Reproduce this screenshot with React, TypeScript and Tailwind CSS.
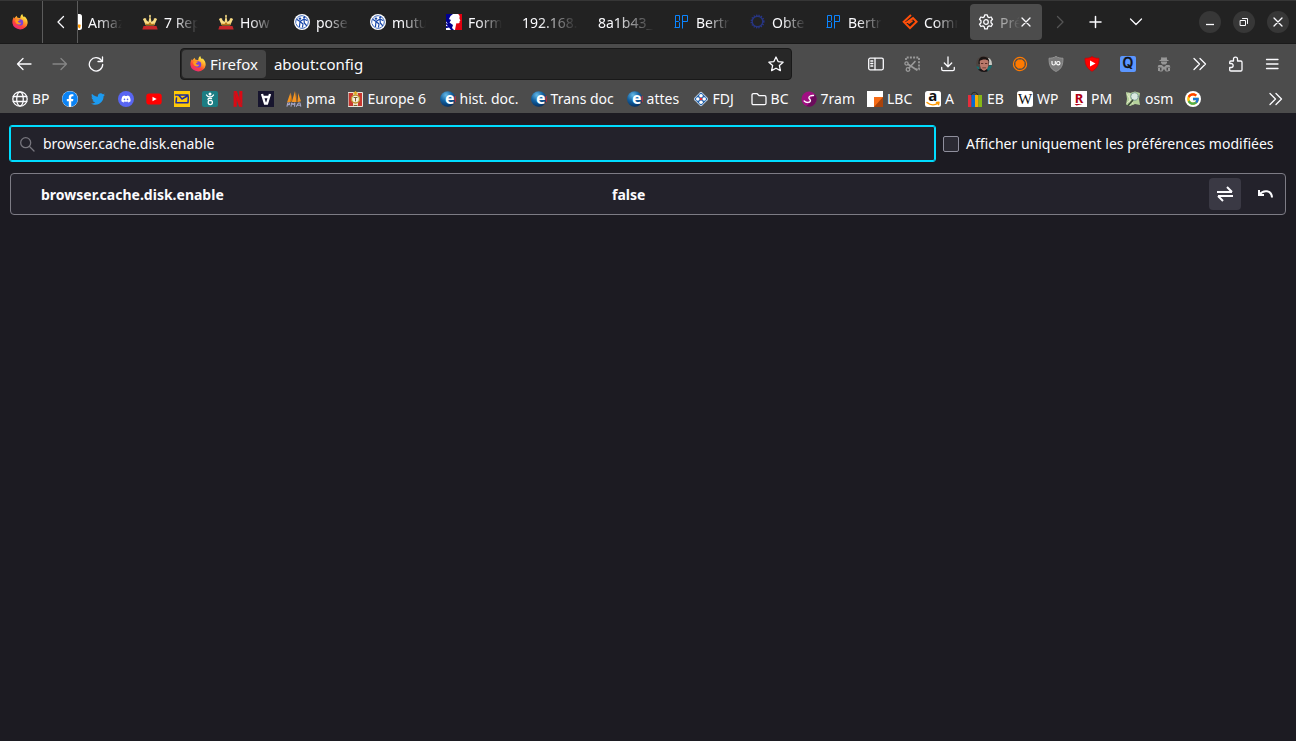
import type { ReactNode } from "react";
import { FaDiscord, FaFacebook, FaTwitter } from "react-icons/fa";
import { FcGoogle } from "react-icons/fc";
import { SiNetflix } from "react-icons/si";

type IconProps = { children: ReactNode; className?: string; box?: string };

function Svg({ children, className = "size-4", box = "0 0 16 16" }: IconProps) {
  return (
    <svg
      viewBox={box}
      className={`shrink-0 ${className}`}
      fill="none"
      stroke="currentColor"
      strokeWidth="1.3"
      strokeLinecap="round"
      strokeLinejoin="round"
      aria-hidden="true"
    >
      {children}
    </svg>
  );
}

function FirefoxLogo({ id }: { id: string }) {
  return (
    <Svg>
      <defs>
        <linearGradient id={id} x1="0.8" y1="0" x2="0.2" y2="1">
          <stop offset="0.1" stopColor="#fff04a" />
          <stop offset="0.42" stopColor="#ff9a26" />
          <stop offset="0.68" stopColor="#ff4338" />
          <stop offset="1" stopColor="#e5218b" />
        </linearGradient>
      </defs>
      <g stroke="none">
        <path
          fill={`url(#${id})`}
          d="M10.3 0c.2 1.6 1 2.5 2 3.3 0-.5.1-.8.2-1.1 2 1.700 3.300 4.200 3.200 6.700A7.700 7.300 0 0 1 .4 9C.2 6.500.8 4.600 2 3l.3 1.400C2.900 3.300 3.700 2.300 4.800 1.700c0 .8.200 1.500.800 2 1-.1 1.900.1 2.600.5C8.300 2.500 9 1 10.300 0z"
        />
        <circle cx="8" cy="8.400" r="3.200" fill="#7a41d8" />
        <path fill="#ff9a20" d="M3.300 6c1.500-1 3.300-1 4.600-.2-.2.8-1.100 1.100-2 1.500.3 1.300 1.700 2 3.300 1.200-.5 2.200-3 2.700-4.600 1.300C3.500 8.900 3 7.400 3.300 6z" />
      </g>
    </Svg>
  );
}

const CrownIcon = () => (
  <Svg>
    <g stroke="none">
      <path fill="#f9dd85" d="M8 .5l1.100 1.600-.6.900 1 5 2.300-2-.1-1.300 1.400-.7 2 .9-1.200 2.600-1.600 3.800H3.700L2.100 7.500.9 4.900l2-.9 1.400.7-.1 1.300 2.300 2 1-5-.6-.9z" />
      <path fill="#b7791b" d="M3.300 9.500l3 .6L8 8l1.700 2.100 3-.6-.6 1.800H3.900z" />
      <path fill="#c9262b" d="M1.500 12h13l1.200 3.500H.3z" />
    </g>
  </Svg>
);

const PeopleIcon = () => (
  <Svg>
    <circle cx="8" cy="8" r="8" fill="#fff" stroke="none" />
    <circle cx="8" cy="8" r="6.300" stroke="#2454b0" strokeWidth=".9" strokeDasharray="5 1.200" />
    <g stroke="#1746a8" strokeWidth="1.200">
      <path d="M3 5.500l3 2 4-2.500 3 1.500M6 7.500l-.5 5M6 7.500l3 2.500-.5 3M10 5l.3 4 2.200 2.500" />
    </g>
    <g fill="#1746a8" stroke="none">
      <circle cx="6" cy="4.600" r="1.200" />
      <circle cx="10.200" cy="3.400" r="1.100" />
    </g>
  </Svg>
);

const MarianneIcon = () => (
  <Svg>
    <g stroke="none">
      <path fill="#fff" d="M0 0h16v16H0z" />
      <path fill="#000091" d="M0 0h7L4.500 2 3 5l2 1-1.500 2.500L7 11l-1 3 2 2H5l-2-2.500L1 14H0v-2l2 .2-2-2V9l2 1-2-2.500z" />
      <path fill="#e1000f" d="M16 0h-3.800l1.500 2-.3 2.500 1 2-.9.800.2 1-.8 1-2.900.2.300 2L16 13.500z" />
      <path fill="#e1000f" d="M10 10.500L16 13v3H9z" />
    </g>
  </Svg>
);

const BpIcon = () => (
  <Svg>
    <path
      stroke="#0a84ff"
      strokeWidth="1"
      strokeLinecap="butt"
      strokeLinejoin="miter"
      d="M1.500 14V1.500h4v5l-1 1 1 1v5h-5M1.500 7.500h3M8.500 14.500v-13h5v6h-5"
    />
  </Svg>
);

const RingIcon = () => (
  <Svg>
    <circle cx="7.500" cy="7.500" r="5.300" stroke="#27357f" strokeWidth="1.400" />
    <circle cx="7.500" cy="7.500" r="6.300" stroke="#28368a" strokeWidth="1.400" strokeDasharray="1.200 1.300" strokeLinecap="butt" />
  </Svg>
);

const DiamondIcon = () => (
  <Svg>
    <path stroke="#ff4f0a" strokeWidth="2" strokeLinecap="butt" strokeLinejoin="miter" d="M9 1L1.700 7.700l6.300 6.500 6.600-6.500-3.600-3.600-5.500 3.800 3 .2" />
    <path stroke="#ff4f0a" strokeWidth="1.600" strokeLinecap="butt" d="M6.500 9.700l4-3" />
  </Svg>
);

const GearIcon = () => (
  <Svg>
    <circle cx="8" cy="8" r="2.300" />
    <path d="M6.700.9h2.600l.5 2 1.300.7 2-.6 1.400 2.300-1.500 1.500v1.900l1.500 1.500-1.400 2.300-2-.6-1.300.8-.5 2.200H6.700l-.5-2.200-1.300-.8-2 .6-1.400-2.300L3 8.700V6.800L1.500 5.300 2.900 3l2 .6 1.300-.7z" />
  </Svg>
);

const CloseIcon = () => (
  <Svg className="size-3" box="0 0 12 12">
    <path d="M2 2l8 8M10 2l-8 8" />
  </Svg>
);

const GlobeIcon = () => (
  <Svg>
    <circle cx="8" cy="8" r="7.200" />
    <ellipse cx="8" cy="8" rx="3.300" ry="7.200" />
    <path d="M1.300 5.500h13.400M1.300 10.500h13.400" />
  </Svg>
);

const FacebookIcon = () => (
  <span className="flex size-4 shrink-0 rounded-full bg-white text-[#0a83f5]">
    <FaFacebook className="size-4" />
  </span>
);

const DiscordIcon = () => (
  <span className="flex size-4 shrink-0 items-center justify-center rounded-full bg-[#5865f2] text-white">
    <FaDiscord className="size-2.5" />
  </span>
);

const YoutubeIcon = () => (
  <Svg>
    <rect x=".3" y="2.500" width="15.400" height="11" rx="2.800" fill="#f00" stroke="none" />
    <path fill="#fff" stroke="none" d="M6.500 5.700l4.200 2.300-4.200 2.300z" />
  </Svg>
);

const PostIcon = () => (
  <Svg>
    <path fill="#ffc907" stroke="none" d="M0 0h16v16H0z" />
    <path stroke="#1f2b9c" strokeWidth="1.500" d="M1.500 4h3l3.500 4 6-3.500M5.500 4h8.500M2.500 7L2 11.800h12l.3-6" />
  </Svg>
);

const TealIcon = () => (
  <Svg>
    <rect width="16" height="16" rx="2" fill="#1c7d83" stroke="none" />
    <circle cx="8" cy="3" r="1.500" fill="#fff" stroke="none" />
    <path stroke="#fff" strokeWidth="1.300" d="M4.500 4c.8 1.500 2 2 3.500 2s2.800-.5 3.500-2" />
    <path stroke="#fff" strokeWidth="1.300" d="M9.500 7.500c-2-.5-3.700 0-3.500 1.200.2.900 1.300 1 2.700.9" />
    <circle cx="8.300" cy="11.500" r="2.100" stroke="#fff" strokeWidth="1.300" />
  </Svg>
);

const InvertedAIcon = () => (
  <Svg>
    <path fill="#17152e" stroke="none" d="M0 0h16v16H0z" />
    <path stroke="#fff" strokeWidth="2.300" strokeLinecap="butt" strokeLinejoin="miter" d="M4 3l3 9.500h2L12 3M5 6h6" />
  </Svg>
);

const SailsIcon = () => (
  <Svg>
    <g stroke="none">
      <path fill="#f39422" d="M4.500 1.500L1 11.500l4.500-1zM9 0L5.800 11h4.700zM12 2v9l3-.7z" />
      <path fill="#c8700c" d="M5.500 3L4 10.500l2-.5zM10 1l.8 10H12z" />
    </g>
    <path stroke="#a5a6c8" strokeWidth="1.100" d="M1 15.300l.7-3.300h2l-.3 1.600H1.500M5 15.300l.6-3.300 1.500 1.500L8.900 12l-.3 3.300M10.500 15.300l2-3.300h1.500l.8 3.300M11.300 14.200h3" />
  </Svg>
);

const EuropeIcon = () => (
  <Svg>
    <path fill="#c8372f" stroke="#e9e4dc" strokeWidth="1" strokeLinejoin="miter" d="M.5 1.500h14v14H.5z" />
    <path fill="#eee3cf" stroke="none" d="M5 2h5v13H5z" />
    <circle cx="7.500" cy="8" r="4" fill="#f7f1df" stroke="#bd942e" strokeWidth="1.400" />
    <path stroke="#77612f" strokeWidth="1" d="M6 6.500h3M7.500 6.500v3.500M6 14.500h3" />
    <path stroke="#e0a91c" strokeWidth="1.500" d="M6 2h3M7.500.8V3" />
  </Svg>
);

const EBadgeIcon = () => (
  <Svg>
    <defs>
      <radialGradient id="e-badge" cx=".38" cy=".25" r=".8">
        <stop offset="0" stopColor="#66b9e6" />
        <stop offset=".5" stopColor="#12609f" />
        <stop offset="1" stopColor="#052b5b" />
      </radialGradient>
    </defs>
    <circle cx="7.800" cy="8" r="7.800" fill="url(#e-badge)" stroke="none" />
    <path stroke="#e02b36" strokeWidth="1" d="M15.200 5.500v5" />
    <text x="5" y="12.500" fontSize="16" fontWeight="700" fontFamily="Noto Sans" fill="#fff" stroke="none">e</text>
  </Svg>
);

const CloverIcon = () => (
  <Svg>
    <g stroke="none">
      <rect x="2.500" y="2.500" width="11" height="11" rx="1.800" transform="rotate(45 8 8)" fill="#d5e2f0" />
      <rect x="3.200" y="3.200" width="9.600" height="9.600" rx="1.200" transform="rotate(45 8 8)" fill="#2363ac" />
      <g fill="#fff">
        <circle cx="8" cy="4.800" r="1.800" />
        <circle cx="8" cy="11.200" r="1.800" />
        <circle cx="4.800" cy="8" r="1.800" />
        <circle cx="11.200" cy="8" r="1.800" />
      </g>
      <circle cx="8" cy="8" r="1.300" fill="#df2632" />
    </g>
  </Svg>
);

const FolderIcon = () => (
  <Svg>
    <path d="M2.500 2.700h3.700l2 2h5.300c1 0 1.500.6 1.500 1.500v6c0 1-.5 1.500-1.500 1.500h-11C1.500 13.700 1 13.200 1 12.200v-8c0-1 .5-1.500 1.500-1.500z" />
  </Svg>
);

const SwirlIcon = () => (
  <Svg>
    <circle cx="8" cy="8" r="7.500" fill="#a00f82" stroke="none" />
    <path fill="#6a0c5b" stroke="none" d="M14 3.500A7.500 7.500 0 0 1 5 14.900C11 13 8 6 14 3.500z" />
    <path stroke="#fff" strokeWidth="1.400" d="M12.500 4.500C10 4.200 7.600 5.300 7.900 7c.2 1.300 2 1.500 1.500 3-.6 1.800-4.200 2-6.200 0" />
  </Svg>
);

const LbcIcon = () => (
  <Svg>
    <path fill="#fff" stroke="none" d="M0 0h16v16H0z" />
    <path fill="#f56b16" stroke="none" d="M7 6h9v10H7z" />
    <path fill="#a9430b" stroke="none" d="M16 6v10H7z" />
  </Svg>
);

const AmazonIcon = () => (
  <Svg>
    <rect width="16" height="16" rx="2.500" fill="#fff" stroke="none" />
    <text x="3.200" y="10.300" fontSize="15" fontWeight="700" fontFamily="Noto Sans" fill="#111" stroke="none">a</text>
    <path stroke="#f90" strokeWidth="1.500" d="M2 11.500c3.500 3 8 3 11 .7M11.500 11.400l2.500-.2-.5 2.400" />
  </Svg>
);

const BagIcon = () => (
  <Svg>
    <path stroke="#202020" strokeWidth="1" strokeDasharray="1.500 1" d="M4 5.500C4 0 11 0 11 5.500" />
    <g stroke="none">
      <path fill="#e52d3b" d="M1 4h3.500v12H1z" />
      <path fill="#0868d2" d="M4.500 4H8v12H4.500z" />
      <path fill="#f5ae05" d="M8 4h3.500v12H8z" />
      <path fill="#86b817" d="M11.500 4H15v12h-3.500z" />
    </g>
  </Svg>
);

const WikiIcon = () => (
  <Svg>
    <rect width="16" height="16" rx="2.500" fill="#fff" stroke="none" />
    <text x="8" y="13" textAnchor="middle" fontSize="15" fontFamily="Liberation Serif" fill="#111" stroke="none">W</text>
  </Svg>
);

const RakutenIcon = () => (
  <Svg>
    <path fill="#fff" stroke="none" d="M0 0h16v16H0z" />
    <text x="8" y="12" textAnchor="middle" fontSize="13" fontWeight="700" fontFamily="Noto Sans" fill="#b00012" stroke="none">R</text>
    <path fill="#b00012" stroke="none" d="M3.500 13h8l-6 1.500z" />
  </Svg>
);

const MapIcon = () => (
  <Svg>
    <path fill="#b5d29b" stroke="none" d="M1 1l4 1 5-1.500L15 2l-1 6 1 6-5-1-5 2-4-1.500L2 8z" />
    <path stroke="#dfe8c4" strokeWidth="1" d="M2 3l6 10M2 12l6-6M4 2l1 12" />
    <circle cx="9.500" cy="5.500" r="3.800" fill="#d9e9e2" stroke="#7b9b95" strokeWidth="1" />
    <path stroke="#3d4e38" strokeWidth="1.800" d="M7.500 9.500l-4 4.500" />
  </Svg>
);

const GoogleIcon = () => (
  <span className="flex size-4 shrink-0 items-center justify-center rounded-full bg-white">
    <FcGoogle className="size-3.5" />
  </span>
);

const AvatarIcon = () => (
  <Svg>
    <defs>
      <clipPath id="avatar">
        <circle cx="8" cy="8" r="8" />
      </clipPath>
    </defs>
    <g clipPath="url(#avatar)" stroke="none">
      <path fill="#4c4440" d="M0 0h16v16H0z" />
      <path fill="#c9cac4" d="M12 2l4 1v6h-3z" />
      <path fill="#156e70" d="M11 11l5-2v7h-5zM0 10l3 1v5H0z" />
      <path fill="#1b1514" d="M2.500 8C2 2 5 .5 8 .7s6 2 5 7z" />
      <path fill="#b9786a" d="M3.800 5C6 3 11 3 12.500 5c.3 5.500-1.300 9.800-4.300 9.800S3.500 10 3.800 5z" />
      <path fill="#5c3029" d="M5 7h2.300v1H5zM9 7h2.300v1H9zM6.300 11.500h3.800v.7H6.300z" />
      <path fill="#171315" d="M2 13.500l3-.5 3 2 3-2 1 3H2z" />
    </g>
  </Svg>
);

type Tab = { label: string; icon?: ReactNode };

const tabs: Tab[] = [
  { label: "Amaz", icon: <AmazonIcon /> },
  { label: "7 Rep", icon: <CrownIcon /> },
  { label: "How", icon: <CrownIcon /> },
  { label: "pose", icon: <PeopleIcon /> },
  { label: "mutu", icon: <PeopleIcon /> },
  { label: "Form", icon: <MarianneIcon /> },
  { label: "192.168." },
  { label: "8a1b43_" },
  { label: "Bertr", icon: <BpIcon /> },
  { label: "Obte", icon: <RingIcon /> },
  { label: "Bertr", icon: <BpIcon /> },
  { label: "Comm", icon: <DiamondIcon /> },
];

type Bookmark = { name: string; label?: string; width?: string; icon: ReactNode };

const bookmarks: Bookmark[] = [
  { name: "BP", label: "BP", width: "min-w-[38px]", icon: <GlobeIcon /> },
  { name: "Facebook", icon: <FacebookIcon /> },
  { name: "Twitter", icon: <FaTwitter className="size-4 p-px text-[#1d9bf0]" /> },
  { name: "Discord", icon: <DiscordIcon /> },
  { name: "YouTube", icon: <YoutubeIcon /> },
  { name: "Mail", icon: <PostIcon /> },
  { name: "Santé", icon: <TealIcon /> },
  { name: "Netflix", icon: <SiNetflix className="size-4 text-[#d90a15]" /> },
  { name: "Vidéo", icon: <InvertedAIcon /> },
  { name: "pma", label: "pma", width: "min-w-[49px]", icon: <SailsIcon /> },
  { name: "Europe 6", label: "Europe 6", width: "min-w-[80px]", icon: <EuropeIcon /> },
  { name: "hist. doc.", label: "hist. doc.", width: "min-w-[79px]", icon: <EBadgeIcon /> },
  { name: "Trans doc", label: "Trans doc", width: "min-w-[84px]", icon: <EBadgeIcon /> },
  { name: "attes", label: "attes", width: "min-w-[54px]", icon: <EBadgeIcon /> },
  { name: "FDJ", label: "FDJ", width: "min-w-[46px]", icon: <CloverIcon /> },
  { name: "BC", label: "BC", width: "min-w-[38px]", icon: <FolderIcon /> },
  { name: "7ram", label: "7ram", width: "min-w-[54px]", icon: <SwirlIcon /> },
  { name: "LBC", label: "LBC", width: "min-w-[46px]", icon: <LbcIcon /> },
  { name: "A", label: "A", width: "min-w-[30px]", icon: <AmazonIcon /> },
  { name: "EB", label: "EB", width: "min-w-[38px]", icon: <BagIcon /> },
  { name: "WP", label: "WP", width: "min-w-[42px]", icon: <WikiIcon /> },
  { name: "PM", label: "PM", width: "min-w-[42px]", icon: <RakutenIcon /> },
  { name: "osm", label: "osm", width: "min-w-[48px]", icon: <MapIcon /> },
  { name: "Google", icon: <GoogleIcon /> },
];

type Action = { name: string; icon: ReactNode };

const actions: Action[] = [
  {
    name: "Panneau latéral",
    icon: (
      <Svg>
        <rect x=".7" y="2.200" width="14.600" height="11.600" rx="1.500" />
        <path d="M7 2.500v11M2.800 5h2M2.800 7.500h2M2.800 10h2" />
      </Svg>
    ),
  },
  {
    name: "Capture d’écran",
    icon: (
      <Svg className="size-4 text-[#9a9a9a]">
        <path strokeWidth="1.800" strokeDasharray="2 1.200" strokeLinecap="butt" d="M2 4V1.500h13v12h-3" />
        <circle cx="2.500" cy="7.500" r="1.600" />
        <circle cx="4" cy="13.500" r="1.800" />
        <path d="M4 8.300l8.500 5.500M5 12l6-6.500" strokeWidth="1.700" />
      </Svg>
    ),
  },
  {
    name: "Téléchargements",
    icon: (
      <Svg>
        <path d="M8 1v9.500M4.300 7L8 10.700 11.700 7M1.700 11.500v1.800c0 .9.500 1.400 1.400 1.400h9.800c.9 0 1.400-.5 1.400-1.400v-1.800" />
      </Svg>
    ),
  },
  { name: "Compte", icon: <AvatarIcon /> },
  {
    name: "Conteneurs",
    icon: (
      <Svg>
        <circle cx="8" cy="8" r="6.600" stroke="#ff7a00" strokeWidth="1.200" />
        <path fill="#ff7a00" stroke="none" d="M6 3.500h4L12.500 6v4L10 12.500H6L3.500 10V6z" />
      </Svg>
    ),
  },
  {
    name: "Bloqueur",
    icon: (
      <Svg>
        <path fill="#7c7c7c" stroke="#9a9a9a" strokeWidth=".8" d="M8 .5c2 1.300 4.500 1.700 7 1.700 0 7-1.500 10.800-7 13.300C2.500 13 1 9.200 1 2.200 3.500 2.200 6 1.800 8 .5z" />
        <path stroke="#fff" strokeWidth="1.100" strokeLinecap="butt" d="M4 5v2.700c0 1.700 3.300 1.700 3.300 0V5" />
        <circle cx="10.300" cy="7.200" r="1.700" stroke="#fff" strokeWidth="1.100" />
      </Svg>
    ),
  },
  {
    name: "Vidéo",
    icon: (
      <Svg>
        <path fill="#f00" stroke="#c00" strokeWidth=".7" d="M8 .8c2 1 4.500 1.500 7 1.500 0 5.500-1.500 10-7 13-5.500-3-7-7.500-7-13 2.500 0 5-.5 7-1.500z" />
        <path fill="#fff" stroke="none" d="M6 4.500L11.500 7.500 6 10.500z" />
      </Svg>
    ),
  },
  {
    name: "Recherche",
    icon: (
      <Svg>
        <rect width="16" height="16" rx="2" fill="#5b96ff" stroke="none" />
        <text x="8" y="12.300" textAnchor="middle" fontSize="14" fontWeight="500" fontFamily="Inter" fill="#111" stroke="#111" strokeWidth=".4">Q</text>
      </Svg>
    ),
  },
  {
    name: "Confidentialité",
    icon: (
      <Svg className="size-4 text-[#979797]">
        <g fill="currentColor" stroke="none">
          <path d="M5.500 1l1 .5h3l1-.5.8 3h1.200v1H3.500V4h1.200zM5 5.500h6v1.500L9.500 8.500h-3L5 7z" />
          <path d="M2.500 9h3.300L8 11l2.200-2h3.300l1 2.500h-4v3h2v1H9.800L8 13l-1.800 2.500H3.500v-1h2v-3h-4z" />
          <path d="M2 12h2v3H2zM12 12h2v3h-2z" />
        </g>
      </Svg>
    ),
  },
  {
    name: "Plus d’outils",
    icon: (
      <Svg>
        <path d="M2 2.500L7.500 8 2 13.500M8 2.500L13.500 8 8 13.500" />
      </Svg>
    ),
  },
  {
    name: "Extensions",
    icon: (
      <Svg>
        <path d="M1.700 7.500V6.200c0-.8.400-1.200 1.200-1.200h2.600V3c0-2.600 4-2.600 4 0v2h3.300c.8 0 1.200.4 1.200 1.200v7.600c0 .8-.4 1.200-1.200 1.200H2.900c-.8 0-1.200-.4-1.200-1.200v-2.300h1.500c2.600 0 2.600-4 0-4z" />
      </Svg>
    ),
  },
  {
    name: "Menu",
    icon: (
      <Svg>
        <path d="M2.500 3.500h11.500M2.500 8h11.500M2.500 12.500h11.500" />
      </Svg>
    ),
  },
];

function TabStrip() {
  return (
    <header className="flex h-11 items-center border-t border-b border-t-[#363636] border-b-[#1a1a1a] bg-[#222222]">
      <button aria-label="Firefox" className="flex w-[43px] shrink-0 items-center justify-center self-stretch border-r border-[#5c5c5c] pr-0.5">
        <FirefoxLogo id="fx-window" />
      </button>
      <button aria-label="Onglets précédents" className="flex w-[35px] shrink-0 items-center justify-center self-stretch border-r border-[#5c5c5c]">
        <Svg>
          <path d="M11.500 2.500L6 8l5.500 5.500" />
        </Svg>
      </button>
      <nav aria-label="Onglets" className="min-w-0 flex-1 overflow-hidden">
        <div className="-ml-5 flex gap-1">
          {tabs.map((tab, i) => (
            <button key={i} className="flex h-9 w-[72px] shrink-0 items-center gap-1.5 px-2 text-left">
              {tab.icon}
              <span className="min-w-0 flex-1 overflow-hidden pt-px whitespace-nowrap [mask-image:linear-gradient(to_right,black_30%,transparent)]">
                {tab.label}
              </span>
            </button>
          ))}
          <div className="flex h-9 w-[72px] shrink-0 items-center rounded bg-[#4c4c4c] pl-2">
            <button className="flex min-w-0 flex-1 items-center gap-1.5 text-left">
              <GearIcon />
              <span className="min-w-0 flex-1 overflow-hidden pt-px whitespace-nowrap text-[#a8a8a8] [mask-image:linear-gradient(to_right,black_30%,transparent)]">
                Pré
              </span>
            </button>
            <button aria-label="Fermer l’onglet" className="mr-2.5 flex shrink-0">
              <CloseIcon />
            </button>
          </div>
        </div>
      </nav>
      <button aria-label="Onglets suivants" className="flex w-7 shrink-0 justify-center text-[#555555]">
        <Svg>
          <path d="M5.500 2.500L11 8l-5.500 5.500" />
        </Svg>
      </button>
      <button aria-label="Nouvel onglet" className="flex w-11 shrink-0 justify-center">
        <Svg>
          <path strokeWidth="1.500" d="M7.500 2.500v11M2 8h11" />
        </Svg>
      </button>
      <button aria-label="Lister les onglets" className="flex w-9 shrink-0 justify-center">
        <Svg>
          <path d="M2.500 5L8 10.500 13.500 5" />
        </Svg>
      </button>
      <div className="ml-[45px] flex shrink-0 gap-3 pr-[7px]">
        <button aria-label="Réduire" className="flex size-[22px] items-center justify-center rounded-full bg-[#373737]">
          <Svg className="size-3" box="0 0 12 12">
            <path strokeLinecap="butt" d="M2 8.500h8" />
          </Svg>
        </button>
        <button aria-label="Restaurer" className="flex size-[22px] items-center justify-center rounded-full bg-[#373737]">
          <Svg className="size-3" box="0 0 12 12">
            <path strokeWidth="1" strokeLinejoin="miter" d="M2.500 4.500h5v5h-5zM4.500 2.500h5v5" />
          </Svg>
        </button>
        <button aria-label="Fermer" className="flex size-[22px] items-center justify-center rounded-full bg-[#373737]">
          <CloseIcon />
        </button>
      </div>
    </header>
  );
}

function Toolbar() {
  return (
    <div className="flex h-10 items-center bg-[#4c4c4c] px-1.5">
      <button aria-label="Page précédente" className="flex w-9 shrink-0 justify-center">
        <Svg>
          <path d="M15 8H1.500M7 2.500L1.500 8 7 13.500" />
        </Svg>
      </button>
      <button aria-label="Page suivante" className="flex w-9 shrink-0 justify-center text-[#858585]">
        <Svg>
          <path d="M1 8h13.500M9 2.500L14.500 8 9 13.500" />
        </Svg>
      </button>
      <button aria-label="Actualiser" className="flex w-9 shrink-0 justify-center">
        <Svg>
          <path d="M13.500 4.500A6.700 6.700 0 1 0 14.700 8.500M14.500 1v4.500H10" />
        </Svg>
      </button>
      <div className="mx-[66px] flex h-8 min-w-0 flex-1 items-center rounded border border-[#191919] bg-[#272727] pr-[7px] pl-px text-[15px]">
        <button className="flex h-7 shrink-0 items-center gap-1 rounded bg-[#464646] px-2">
          <FirefoxLogo id="fx-identity" />
          Firefox
        </button>
        <input
          aria-label="Adresse"
          defaultValue="about:config"
          className="h-7 min-w-0 flex-1 bg-transparent px-2 outline-none"
        />
        <button aria-label="Marquer cette page" className="flex shrink-0">
          <Svg>
            <path d="M8 1l2.100 4.600 5 .6-3.700 3.400 1 5L8 12.200l-4.400 2.400 1-5L.9 6.200l5-.6z" />
          </Svg>
        </button>
      </div>
      {actions.map((action) => (
        <button key={action.name} aria-label={action.name} className="flex w-9 shrink-0 justify-center">
          {action.icon}
        </button>
      ))}
    </div>
  );
}

function BookmarksBar() {
  return (
    <nav aria-label="Marque-pages" className="flex h-[29px] items-center bg-[#4c4c4c] px-3">
      <div className="flex min-w-0 flex-1 items-center gap-3 overflow-hidden">
        {bookmarks.map((bookmark) => (
          <a
            key={bookmark.name}
            href="#"
            aria-label={bookmark.name}
            className={`flex shrink-0 items-center gap-1 whitespace-nowrap ${bookmark.width ?? ""}`}
          >
            {bookmark.icon}
            {bookmark.label}
          </a>
        ))}
      </div>
      <button aria-label="Autres marque-pages" className="flex shrink-0">
        <Svg>
          <path d="M2 2.500L7.500 8 2 13.500M8 2.500L13.500 8 8 13.500" />
        </Svg>
      </button>
    </nav>
  );
}

function ConfigPage() {
  return (
    <main className="flex-1 bg-[#1c1b22] px-2.5 pt-[13px]">
      <div className="flex items-center gap-2">
        <div className="flex h-[35px] min-w-0 flex-1 items-center gap-2 rounded-xs border border-[#00ddff] bg-[#23222b] px-2 outline-1 outline-[#00ddff]">
          <Svg className="size-4 text-[#77767e]">
            <circle cx="6.700" cy="6.700" r="5" />
            <path d="M10.500 10.500l4.500 4.500" />
          </Svg>
          <input
            aria-label="Rechercher un nom de préférence"
            defaultValue="browser.cache.disk.enable"
            className="min-w-0 flex-1 bg-transparent outline-none"
          />
        </div>
        <label className="flex w-[343px] shrink-0 items-center gap-[7px]">
          <input type="checkbox" className="size-4 appearance-none rounded-xs border border-[#8f8f9d] bg-[#2b2a33]" />
          Afficher uniquement les préférences modifiées
        </label>
      </div>
      <div className="mt-3 rounded border border-[#7d7c85] bg-[#23222b]">
        <table className="w-full table-fixed">
          <tbody>
            <tr className="h-10">
              <th scope="row" className="w-[571px] pt-px pl-[30px] text-left font-bold">
                browser.cache.disk.enable
              </th>
              <td className="pt-px pl-[30px] font-bold">false</td>
              <td className="w-20 pr-1">
                <div className="flex justify-end gap-2">
                  <button aria-label="Inverser" className="flex size-8 items-center justify-center rounded bg-[#3a3944]">
                    <Svg>
                      <path strokeWidth="2" strokeLinecap="butt" strokeLinejoin="miter" d="M0 6h15M10 1l5 5M16 10H1M6 15l-5-5" />
                    </Svg>
                  </button>
                  <button aria-label="Réinitialiser" className="flex size-8 items-center justify-center">
                    <Svg>
                      <path strokeWidth="2" strokeLinecap="butt" strokeLinejoin="miter" d="M2 4v5h5M2.500 8.500c4-5 12-4.500 12.500 3" />
                    </Svg>
                  </button>
                </div>
              </td>
            </tr>
          </tbody>
        </table>
      </div>
    </main>
  );
}

export default function App() {
  return (
    <div className="flex min-h-screen flex-col bg-[#1c1b22] font-['Noto_Sans',sans-serif] text-[14px] leading-5 text-[#fbfbfe]">
      <TabStrip />
      <Toolbar />
      <BookmarksBar />
      <ConfigPage />
    </div>
  );
}
